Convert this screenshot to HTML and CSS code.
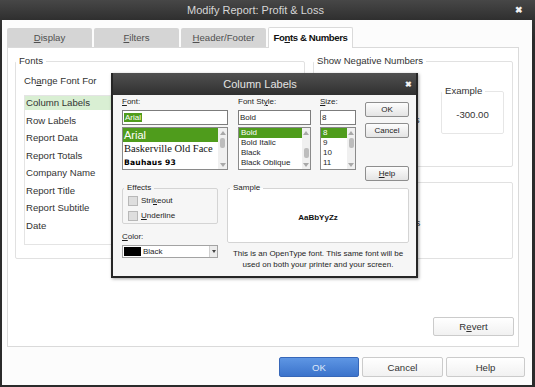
FILE: index.html
```html
<!DOCTYPE html>
<html>
<head>
<meta charset="utf-8">
<title>Modify Report: Profit &amp; Loss</title>
<link rel="stylesheet" href="styles.css">
</head>
<body>
<div class="window">
  <div class="titlebar">
    <div class="title">Modify Report: Profit &amp; Loss</div>
    <div class="close">&#x2716;</div>
  </div>
  <div class="win-body">
    <div class="tabs">
      <div class="tab"><span><u>D</u>isplay</span></div>
      <div class="tab"><span><u>F</u>ilters</span></div>
      <div class="tab"><span><u>H</u>eader/Footer</span></div>
      <div class="tab active"><span>Fo<u>n</u>ts &amp; Numbers</span></div>
    </div>
    <div class="panel">
      <div class="panel-row">
        <fieldset class="group fonts-group">
          <legend>Fonts</legend>
          <div class="fonts-body">
            <div class="change-label">Ch<u>a</u>nge Font For</div>
            <div class="item-list">
              <div class="item selected">Column Labels</div>
              <div class="item">Row Labels</div>
              <div class="item">Report Data</div>
              <div class="item">Report Totals</div>
              <div class="item">Company Name</div>
              <div class="item">Report Title</div>
              <div class="item">Report Subtitle</div>
              <div class="item">Date</div>
            </div>
          </div>
        </fieldset>
        <div class="right-col">
          <fieldset class="group neg-group">
            <legend>Show Negative Numbers</legend>
            <div class="neg-body">
              <div class="options">
                <div>In Parentheses</div>
              </div>
              <fieldset class="group example">
                <legend>Example</legend>
                <div class="example-body">-300.00</div>
              </fieldset>
            </div>
          </fieldset>
          <fieldset class="group all-group">
            <div class="all-body">
              <div>Without Cents</div>
            </div>
          </fieldset>
        </div>
      </div>
      <div class="revert-row">
        <div class="btn revert"><span>R<u>e</u>vert</span></div>
      </div>
    </div>
    <div class="footer">
      <div class="btn primary">OK</div>
      <div class="btn cancel">Cancel</div>
      <div class="btn help">Help</div>
    </div>
  </div>

  <div class="dlg">
    <div class="dlg-title">
      <div class="dlg-title-text">Column Labels</div>
      <div class="dlg-close">&#x2716;</div>
    </div>
    <div class="dlg-body">
      <div class="dlg-row1">
        <div class="col col-font">
          <div class="lbl"><u>F</u>ont:</div>
          <div class="input"><span class="sel-text">Arial</span></div>
          <div class="list">
            <div class="list-items">
              <div class="fitem arial sel">Arial</div>
              <div class="fitem basker">Baskerville Old Face</div>
              <div class="fitem bauhaus">Bauhaus 93</div>
            </div>
            <div class="sbar wide">
              <div class="arr up"></div>
              <div class="thumb t-top"></div>
              <div class="arr down"></div>
            </div>
          </div>
        </div>
        <div class="col col-style">
          <div class="lbl">Font St<u>y</u>le:</div>
          <div class="input">Bold</div>
          <div class="list">
            <div class="list-items">
              <div class="sitem sel">Bold</div>
              <div class="sitem">Bold Italic</div>
              <div class="sitem">Black</div>
              <div class="sitem">Black Oblique</div>
            </div>
            <div class="sbar">
              <div class="arr up"></div>
              <div class="thumb t-mid"></div>
              <div class="arr down"></div>
            </div>
          </div>
        </div>
        <div class="col col-size">
          <div class="lbl"><u>S</u>ize:</div>
          <div class="input">8</div>
          <div class="list">
            <div class="list-items">
              <div class="sitem sel">8</div>
              <div class="sitem">9</div>
              <div class="sitem">10</div>
              <div class="sitem">11</div>
            </div>
            <div class="sbar">
              <div class="arr up"></div>
              <div class="thumb t-top"></div>
              <div class="arr down"></div>
            </div>
          </div>
        </div>
        <div class="col col-btns">
          <div class="dbtn ok">OK</div>
          <div class="dbtn cancel">Cancel</div>
          <div class="dbtn help"><span><u>H</u>elp</span></div>
        </div>
      </div>
      <div class="dlg-row2">
        <div class="left2">
          <fieldset class="dgroup effects">
            <legend>Effects</legend>
            <div class="effects-body">
              <div class="chk-row"><span class="chk"></span><span>Stri<u>k</u>eout</span></div>
              <div class="chk-row"><span class="chk"></span><span><u>U</u>nderline</span></div>
            </div>
          </fieldset>
          <div class="lbl color-lbl"><u>C</u>olor:</div>
          <div class="combo">
            <span class="swatch"></span>
            <span class="combo-text">Black</span>
            <span class="combo-btn"><span class="mini-down"></span></span>
          </div>
        </div>
        <div class="right2">
          <fieldset class="dgroup sample">
            <legend>Sample</legend>
            <div class="sample-body">AaBbYyZz</div>
          </fieldset>
          <div class="desc">This is an OpenType font. This same font will be<br>used on both your printer and your screen.</div>
        </div>
      </div>
    </div>
  </div>
</div>
</body>
</html>
```
FILE: styles.css
```css
* { box-sizing: border-box; }
html, body { margin: 0; padding: 0; }
body {
  width: 535px;
  height: 387px;
  overflow: hidden;
  font-family: "Liberation Sans", Arial, sans-serif;
  font-size: 9.6px;
  color: #333;
  background: #2d2d2d;
}
u { text-decoration: underline; text-underline-offset: 1px; }

.window {
  position: relative;
  width: 535px;
  height: 387px;
  display: flex;
  flex-direction: column;
  background: linear-gradient(#3c3c3c, #2b2b2b 40px, #2b2b2b);
}
.titlebar {
  height: 20px;
  display: flex;
  align-items: center;
  padding-left: 12px;
  background: linear-gradient(#474747, #2f2f2f);
  color: #d6d6d6;
  font-size: 11px;
}
.title { flex: 1; text-align: center; }
.close {
  width: 36px;
  padding-right: 12px;
  text-align: right;
  color: #f2f2f2;
  font-size: 9px;
  font-weight: bold;
}

.win-body {
  flex: 1;
  margin: 0 3px 2px 2px;
  background: #fcfcfc;
  padding: 8px 7px 8px 5px;
  display: flex;
  flex-direction: column;
}
.tabs { display: flex; height: 19px; }
.tab {
  width: 85px;
  margin-right: 2px;
  height: 19px;
  line-height: 19px;
  text-align: center;
  background: #d5d5d5;
  color: #505050;
  border-radius: 2px 2px 0 0;
}
.tab.active {
  position: relative;
  z-index: 1;
  height: 21px;
  margin-top: -1px;
  line-height: 20px;
  background: #fff;
  border: 1px solid #dadada;
  border-bottom: none;
  color: #111;
  font-weight: bold;
  letter-spacing: -0.4px;
}

.panel {
  height: 300px;
  margin-right: 6px;
  background: #fff;
  border: 1px solid #dadada;
  padding: 7px 5px 10px 7px;
  display: flex;
  flex-direction: column;
}
.panel-row { display: flex; gap: 8px; }

.group {
  margin: 0;
  padding: 0;
  min-width: 0;
  border: 1px solid #e1e1e1;
  border-radius: 2px;
}
.group > legend {
  padding: 0 3px;
  line-height: 12px;
  color: #333;
}
.fonts-group { width: 290px; }
.fonts-body { padding: 8px 9px 13px 8px; }
.change-label { line-height: 12px; }
.item-list {
  margin-top: 8px;
  height: 150px;
  border: 1px solid #e4e4e4;
}
.item {
  height: 14px;
  line-height: 14px;
  margin-bottom: 3.5px;
  padding-left: 1px;
}
.item.selected { background: #d9efd3; }

.right-col {
  width: 200px;
  display: flex;
  flex-direction: column;
}
.neg-body { height: 99px; display: flex; }
.options {
  width: 109px;
  padding-left: 41px;
  padding-top: 43px;
  line-height: 20px;
  white-space: nowrap;
}
.example {
  width: 63px;
  height: 49px;
  margin-top: 18px;
  margin-left: 18px;
  border-color: #e6e6e6;
}
.example-body {
  height: 35px;
  display: flex;
  align-items: center;
  justify-content: center;
  color: #333;
}
.all-group { margin-top: 15px; }
.all-body {
  height: 75px;
  padding-left: 46px;
  padding-top: 30px;
  line-height: 20px;
  white-space: nowrap;
}

.revert-row { margin-top: auto; display: flex; justify-content: flex-end; margin-right: -1px; }
.btn {
  height: 19px;
  display: flex;
  align-items: center;
  justify-content: center;
  border: 1px solid #cbcbcb;
  border-radius: 2px;
  background: linear-gradient(#ffffff, #f1f1f1);
  color: #333;
}
.revert { width: 81px; }
.footer {
  margin-top: 10px;
  height: 20px;
  display: flex;
  justify-content: flex-end;
  gap: 3px;
}
.footer .btn { height: 20px; }
.primary {
  width: 80px;
  background: linear-gradient(#5e96e4, #3b73cb);
  border-color: #3767b8;
  color: #dfe8f8;
}
.footer .cancel { width: 81px; }
.footer .help { width: 79px; }

/* ---- Column Labels dialog ---- */
.dlg {
  position: absolute;
  left: 111px;
  top: 73px;
  width: 307px;
  height: 205px;
  background: #262626;
  padding: 0 2px 2px;
  display: flex;
  flex-direction: column;
  box-shadow: 1px 1px 3px rgba(0,0,0,0.35);
  z-index: 5;
}
.dlg-title {
  height: 22px;
  display: flex;
  align-items: center;
  padding-left: 7px;
  background: linear-gradient(#505050, #303030);
  color: #e4e4e4;
  font-size: 11px;
}
.dlg-title-text { flex: 1; text-align: center; }
.dlg-close {
  width: 16px;
  text-align: center;
  color: #f2f2f2;
  font-size: 8px;
  font-weight: bold;
}
.dlg-body {
  flex: 1;
  background: #f6f6f6;
  padding: 2px 7px 0 9px;
  font-size: 8px;
  color: #1e1e1e;
}
.dlg-row1 { display: flex; }
.col { display: flex; flex-direction: column; }
.col-font { width: 106px; margin-right: 10px; }
.col-style { width: 73px; margin-right: 9px; }
.col-size { width: 36px; margin-right: 9px; }
.col-btns { width: 44px; }
.lbl { height: 10px; line-height: 10px; margin-bottom: 3px; }
.input {
  height: 15px;
  border: 1px solid #7c7c7c;
  background: #fff;
  padding: 0 1px;
  line-height: 13px;
  white-space: nowrap;
}
.sel-text { background: #4f9c1c; color: #fff; padding: 0 1px; }
.list {
  margin-top: 2px;
  height: 43px;
  border: 1px solid #8a8a8a;
  background: #fff;
  display: flex;
  overflow: hidden;
}
.list-items { flex: 1; min-width: 0; white-space: nowrap; overflow: hidden; }
.sel { background: #4f9c1c; color: #fff; }
.fitem { height: 14px; line-height: 14px; padding-left: 1px; }
.fitem.arial { font-size: 11px; }
.fitem.basker { font-family: "Liberation Serif", "Times New Roman", serif; font-size: 10.5px; color: #111; }
.fitem.bauhaus { font-family: "DejaVu Sans", sans-serif; font-weight: bold; font-size: 7.6px; color: #000; letter-spacing: 0.2px; }
.sitem { height: 10px; line-height: 10px; padding-left: 2px; }

.sbar {
  width: 8px;
  background: #f0f0f0;
  display: flex;
  flex-direction: column;
  align-items: center;
  padding: 3px 0 2px;
}
.sbar.wide { width: 9px; }
.arr { width: 0; height: 0; border-left: 3px solid transparent; border-right: 3px solid transparent; }
.arr.up { border-bottom: 4px solid #a8a8a8; }
.arr.down { border-top: 4px solid #a8a8a8; margin-top: auto; }
.thumb { width: 5px; height: 10px; background: #bdbdbd; border-radius: 2px; }
.t-top { margin-top: 3px; }
.t-mid { margin-top: 13px; }

.dbtn {
  height: 15px;
  display: flex;
  align-items: center;
  justify-content: center;
  border: 1px solid #8e8e8e;
  border-radius: 2px;
  background: linear-gradient(#fdfdfd, #e4e4e4);
  color: #222;
}
.dbtn.ok { margin-top: 5px; }
.dbtn.cancel { margin-top: 6px; }
.dbtn.help { margin-top: 28px; }

.dlg-row2 { display: flex; margin-top: 2px; }
.left2 { width: 96px; margin-right: 9px; }
.right2 { width: 182px; }
.dgroup {
  margin: 0;
  padding: 0;
  min-width: 0;
  border: 1px solid #d4d4d4;
  border-radius: 2px;
}
.dgroup > legend { padding: 0 3px; line-height: 10px; margin-left: 1px; }
.dgroup.sample > legend { margin-left: 2px; }
.effects-body { height: 30px; }
.chk-row { height: 15px; display: flex; align-items: center; }
.chk {
  width: 10px;
  height: 10px;
  margin-left: 5px;
  margin-right: 3px;
  background: #dedede;
  border: 1px solid #b8b8b8;
}
.color-lbl { margin-top: 8px; margin-bottom: 3px; }
.combo {
  height: 13px;
  border: 1px solid #a3a3a3;
  background: #fff;
  display: flex;
  align-items: center;
}
.swatch { width: 17px; height: 9px; background: #000; margin: 0 2px 0 1px; }
.combo-text { flex: 1; line-height: 11px; }
.combo-btn {
  width: 8px;
  height: 11px;
  background: #ececec;
  border-left: 1px solid #d0d0d0;
  display: flex;
  align-items: center;
  justify-content: center;
}
.mini-down { width: 0; height: 0; border-left: 2.5px solid transparent; border-right: 2.5px solid transparent; border-top: 3px solid #444; }
.sample { background: #fff; }
.sample-body {
  height: 49px;
  display: flex;
  align-items: center;
  justify-content: center;
  font-weight: bold;
  color: #111;
}
.desc {
  margin-top: 5px;
  text-align: center;
  line-height: 11px;
  white-space: nowrap;
}
```
